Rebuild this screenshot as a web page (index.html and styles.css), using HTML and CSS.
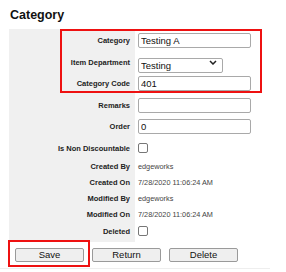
FILE: index.html
```html
<!DOCTYPE html>
<html lang="en">
<head>
  <meta charset="UTF-8">
  <meta name="viewport" content="width=device-width, initial-scale=1.0">
  <title>Category</title>
  <link rel="stylesheet" href="styles.css">
</head>
<body>
  <div class="page">
    <h1 class="page-title">Category</h1>

    <!-- Form rows -->
    <div class="form">
      <div class="row row-field">
        <div class="lbl">Category</div>
        <div class="val"><input type="text" class="txt" value="Testing A"></div>
      </div>
      <div class="row row-field">
        <div class="lbl">Item Department</div>
        <div class="val">
          <div class="select-wrap">
            <select class="sel">
              <option>Testing</option>
            </select>
            <svg class="chev" width="8" height="5" viewBox="0 0 8 5"><path d="M1 1l3 3 3-3" fill="none" stroke="#222" stroke-width="1.5"/></svg>
          </div>
        </div>
      </div>
      <div class="row row-field">
        <div class="lbl">Category Code</div>
        <div class="val"><input type="text" class="txt" value="401"></div>
      </div>
      <div class="row row-field">
        <div class="lbl">Remarks</div>
        <div class="val"><input type="text" class="txt" value=""></div>
      </div>
      <div class="row row-field">
        <div class="lbl">Order</div>
        <div class="val"><input type="text" class="txt" value="0"></div>
      </div>
      <div class="row row-check">
        <div class="lbl">Is Non Discountable</div>
        <div class="val"><input type="checkbox" class="chk"></div>
      </div>
      <div class="row row-text">
        <div class="lbl">Created By</div>
        <div class="val info">edgeworks</div>
      </div>
      <div class="row row-text">
        <div class="lbl">Created On</div>
        <div class="val info">7/28/2020 11:06:24 AM</div>
      </div>
      <div class="row row-text">
        <div class="lbl">Modified By</div>
        <div class="val info">edgeworks</div>
      </div>
      <div class="row row-text">
        <div class="lbl">Modified On</div>
        <div class="val info">7/28/2020 11:06:24 AM</div>
      </div>
      <div class="row row-last">
        <div class="lbl">Deleted</div>
        <div class="val"><input type="checkbox" class="chk"></div>
      </div>
    </div>

    <div class="actions">
      <button class="btn">Save</button>
      <button class="btn">Return</button>
      <button class="btn">Delete</button>
    </div>

    <!-- Red highlight marks -->
    <div class="mark mark-top"></div>
    <div class="mark mark-save"></div>
  </div>
</body>
</html>
```

FILE: styles.css
```css
body {
  margin: 0;
  padding: 0;
  background: #fff;
  font-family: 'Liberation Sans', Arial, sans-serif;
  color: #111;
}

.page {
  position: relative;
  width: 270px;
  padding: 8px 0 6px 9px;
  box-sizing: border-box;
  border-bottom: 1px solid #eeeeee;
}

.page-title {
  margin: 0 0 6px 1px;
  font-size: 12.5px;
  line-height: 15px;
  font-weight: bold;
  color: #111;
}

/* Form */
.form {
  display: flex;
  flex-direction: column;
  padding: 1px 0 2.5px 0;
  background: linear-gradient(to right, #f0f0f0 126px, #fff 126px);
}

.row {
  display: grid;
  grid-template-columns: 126px 1fr;
  align-items: center;
}

.row-field {
  height: 21.5px;
}

.row-check {
  height: 21px;
}

.row-text {
  height: 16px;
}

.row-last {
  height: 17px;
}

.lbl {
  text-align: right;
  padding-right: 5px;
  font-size: 7.5px;
  font-weight: bold;
  color: #222;
}

.val {
  padding-left: 3px;
  display: flex;
  align-items: center;
}

.info {
  font-size: 7.3px;
  color: #444;
}

.txt {
  width: 113px;
  height: 15px;
  box-sizing: border-box;
  border: 1px solid #a9a9a9;
  border-radius: 2px;
  padding: 0 2px;
  margin: 0;
  font-family: 'Liberation Sans', Arial, sans-serif;
  font-size: 9.5px;
  color: #111;
  outline: none;
}

.select-wrap {
  position: relative;
  width: 85px;
  height: 15px;
}

.sel {
  -webkit-appearance: none;
  appearance: none;
  width: 85px;
  height: 15px;
  box-sizing: border-box;
  border: 1px solid #a9a9a9;
  border-radius: 2px;
  padding: 0 2px;
  margin: 0;
  background: #fff;
  font-family: 'Liberation Sans', Arial, sans-serif;
  font-size: 9.5px;
  color: #111;
}

.chev {
  position: absolute;
  right: 6px;
  top: 5px;
}

.chk {
  -webkit-appearance: none;
  appearance: none;
  width: 10px;
  height: 10px;
  margin: 0;
  border: 1px solid #777;
  border-radius: 2px;
  background: #fff;
}

/* Buttons */
.actions {
  display: flex;
  gap: 8px;
  margin: 6px 0 0 6px;
}

.btn {
  width: 69px;
  height: 14px;
  padding: 0;
  border: 1px solid #9a9a9a;
  border-radius: 2px;
  background: #efefef;
  font-family: 'Liberation Sans', Arial, sans-serif;
  font-size: 9.5px;
  line-height: 12px;
  color: #111;
}

/* Annotation boxes */
.mark {
  position: absolute;
  border: 2px solid #ee1111;
  box-sizing: border-box;
}

.mark-top {
  left: 60px;
  top: 29px;
  width: 202px;
  height: 64px;
}

.mark-save {
  left: 8px;
  top: 240px;
  width: 82px;
  height: 27px;
}
```
